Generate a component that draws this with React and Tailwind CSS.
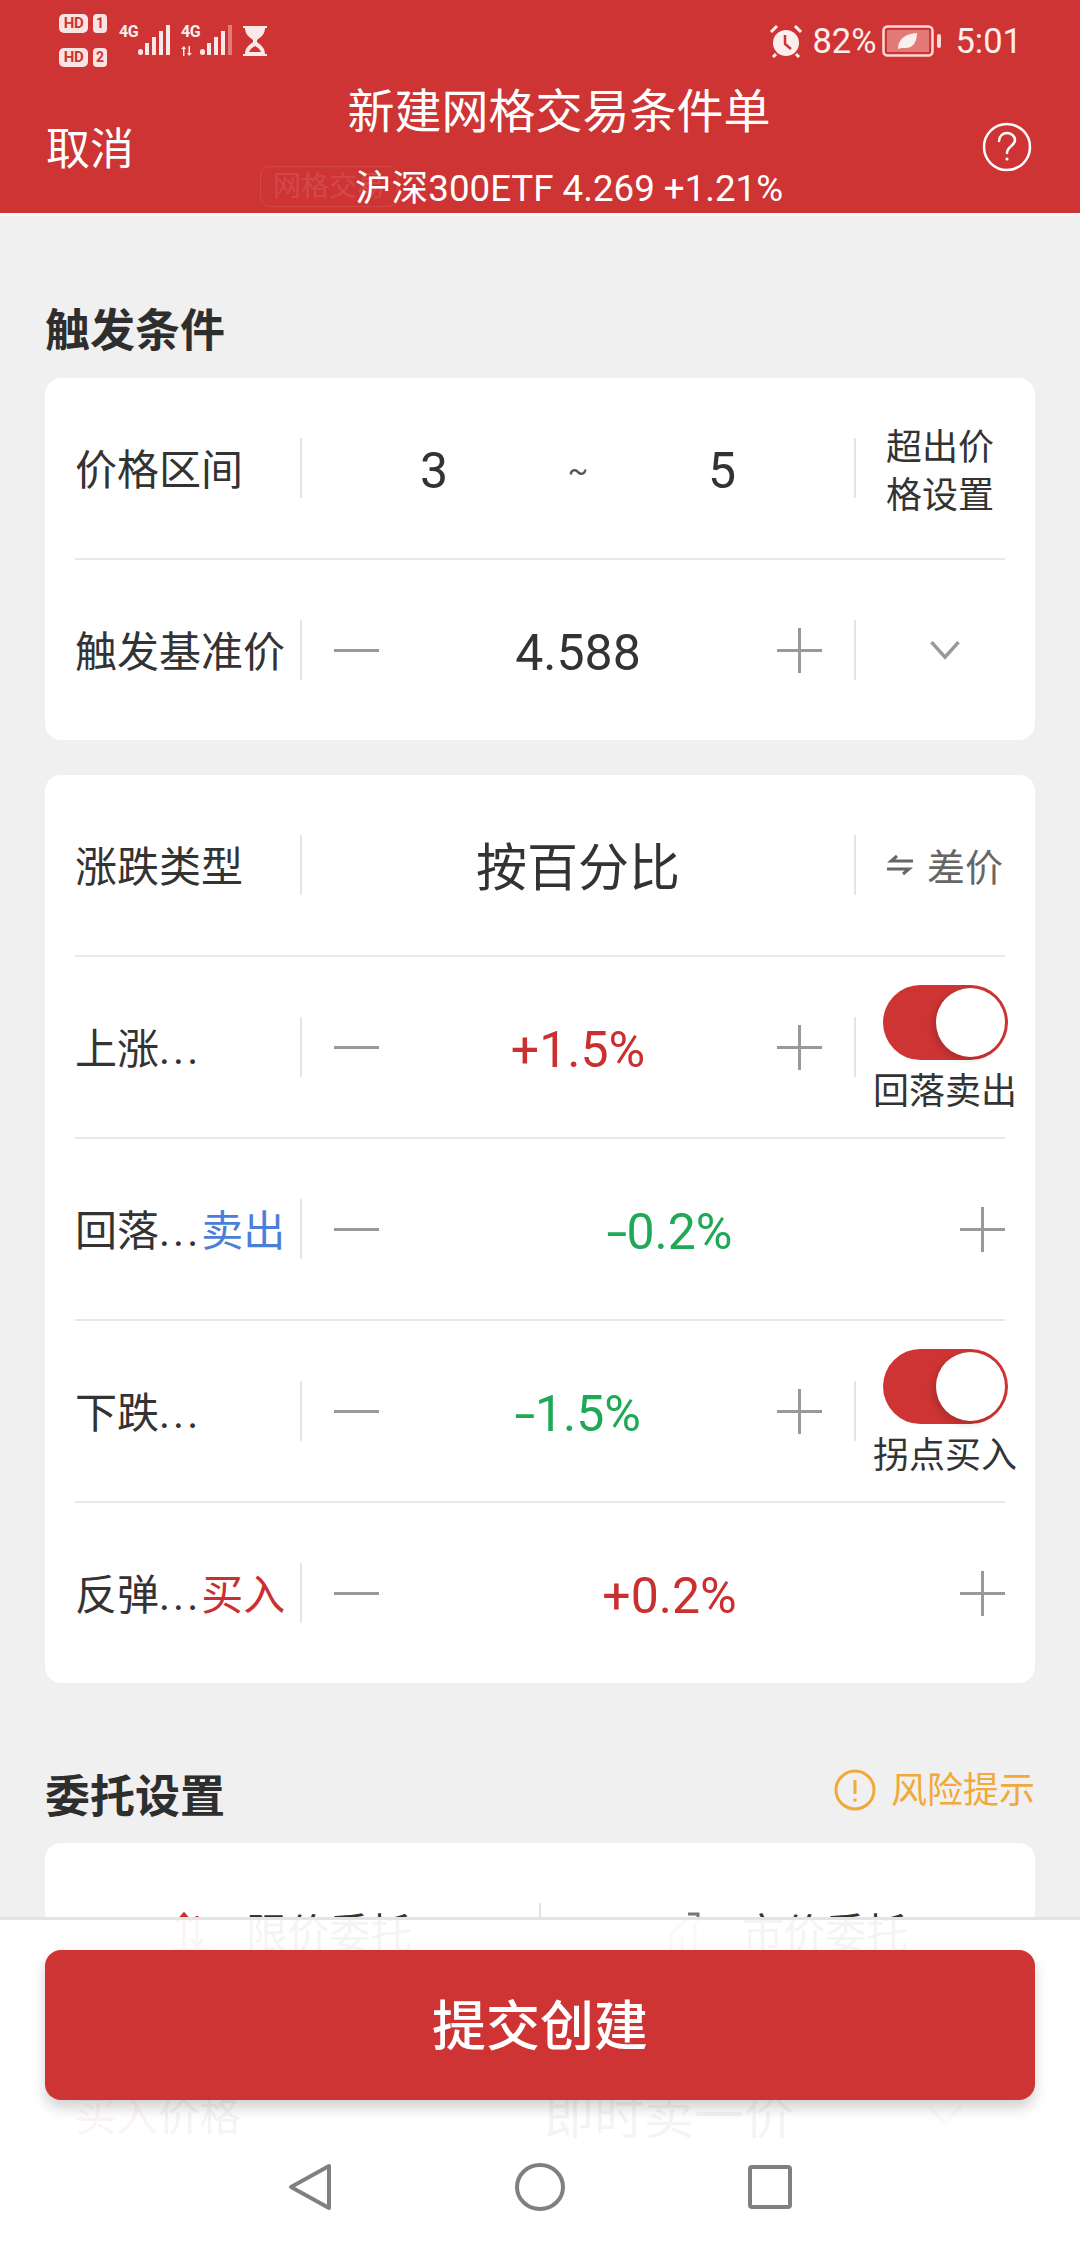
const RED = "bg-[#cd3433]";

function Signal({ last = "#fbe9e9" }) {
  return (
    <svg width="33" height="32" viewBox="0 0 33 32" fill="none">
      <rect x="0" y="25" width="5" height="6" rx="2.5" fill="#fbe9e9" />
      <rect x="7" y="19" width="4" height="12" fill="#fbe9e9" />
      <rect x="14" y="13" width="4" height="18" fill="#fbe9e9" />
      <rect x="21" y="7" width="4" height="24" fill="#fbe9e9" />
      <rect x="28" y="1" width="4" height="30" fill={last} />
    </svg>
  );
}

function SimBadge({ n }) {
  return (
    <div className="flex items-center gap-[5px]">
      <div className="w-[29px] h-[19px] rounded-[5px] bg-[#fbe3e3] text-[#cd3433] text-[15px] font-bold leading-[19px] text-center tracking-[-0.5px]">HD</div>
      <div className="w-[14px] h-[19px] rounded-[4px] bg-[#fbe3e3] text-[#cd3433] text-[14px] font-bold leading-[19px] text-center">{n}</div>
    </div>
  );
}

function StatusBar() {
  return (
    <div className="flex items-start justify-between h-[72px] pl-[59px] pr-[58px] text-[#fdeeee]">
      <div className="flex items-start">
        <div className="flex flex-col gap-[15px] pt-[14px]">
          <SimBadge n="1" />
          <SimBadge n="2" />
        </div>
        <div className="flex items-start ml-[12px] pt-[24px]">
          <span className="text-[16px] font-bold leading-[16px] tracking-[-0.5px]">4G</span>
          <Signal />
        </div>
        <div className="relative flex items-start ml-[10px] pt-[24px]">
          <span className="text-[16px] font-bold leading-[16px] tracking-[-0.5px]">4G</span>
          <svg className="absolute left-0 top-[46px]" width="18" height="10" viewBox="0 0 18 10" fill="#fbe9e9">
            <path d="M2 10V3H0l3-3 2 3H3.5v7zM9 0v7h2L8 10 6 7h1.5V0z" />
          </svg>
          <Signal last="#e27a78" />
        </div>
        <svg className="ml-[10px] mt-[26px]" width="24" height="30" viewBox="0 0 24 30" fill="#fbe9e9">
          <path d="M0 0h24v2h-2c0 6-4 9-8 12v2c4 3 8 6 8 12h2v2H0v-2h2c0-6 4-9 8-12v-2C6 11 2 8 2 2H0z" />
          <path d="M6 26c1-3 4-5 6-6 2 1 5 3 6 6z" fill="#cd3433" />
          <path d="M5 2h14c0 3-1 6-3 7H8C6 8 5 5 5 2z" fill="#fbe9e9" />
        </svg>
      </div>
      <div className="flex items-center mt-[22px] h-[38px]">
        <svg width="34" height="34" viewBox="0 0 34 34" fill="none">
          <circle cx="17" cy="19" r="13" fill="#fdeeee" />
          <path d="M16 11v9l6 5" stroke="#cd3433" strokeWidth="2.5" />
          <path d="M2 8l6-6M32 8l-6-6M7 30l-3 3M27 30l3 3" stroke="#fdeeee" strokeWidth="3" />
        </svg>
        <span className="ml-[9px] text-[34.5px] leading-none">82%</span>
        <svg className="ml-[6px]" width="60" height="32" viewBox="0 0 60 32" fill="none">
          <rect x="1.5" y="1.5" width="49" height="29" rx="4" stroke="#fbd9d9" strokeWidth="2.5" />
          <rect x="5" y="5" width="42" height="22" rx="1" fill="#e27a78" />
          <path d="M16 24c0-10 7-15 19-16 0 10-5 16-13 15-2 0-4 0-6 1z" fill="#fdeeee" />
          <rect x="55" y="9" width="4" height="14" rx="2" fill="#fbd9d9" />
        </svg>
        <span className="ml-[13px] text-[34.5px] leading-none">5:01</span>
      </div>
    </div>
  );
}

function Header() {
  return (
    <header className={`relative shrink-0 h-[216px] border-b-[3px] border-[#f9f6f6] ${RED} text-white`}>
      <StatusBar />
      <div className="absolute left-[260px] top-[166px] w-[138px] h-[41px] rounded-[10px] border border-white/10 text-white/10 text-[28px] leading-[39px] text-center">网格交易</div>
      <div className="relative flex items-center justify-between h-[130px] mt-[10px] pl-[46px] pr-[48px]">
        <span className="pt-[5px] text-[44px] leading-none">取消</span>
        <div className="flex flex-col items-center justify-between h-full pl-[2px]">
          <div className="pt-[4px] text-[47px] leading-[52px]">新建网格交易条件单</div>
          <div className="ml-[20px] pt-[4px] text-[36.7px] leading-[46px] whitespace-nowrap">沪深300ETF 4.269 +1.21%</div>
        </div>
        <svg width="50" height="50" viewBox="0 0 50 50" fill="none" stroke="white" strokeWidth="2.5">
          <circle cx="25" cy="25" r="23" />
          <path d="M17 19c0-5 4-8 8-8s8 3 8 7c0 6-8 6-8 13" strokeLinecap="round" />
          <circle cx="25" cy="37" r="1.6" fill="white" stroke="none" />
        </svg>
      </div>
    </header>
  );
}

function Row({ last, children }) {
  return (
    <div className={`flex items-center mx-[30px] ${last ? "h-[180px]" : "h-[182px] border-b-2 border-[#e8e8e8]"}`}>
      {children}
    </div>
  );
}

function Label({ children }) {
  return <div className="w-[225px] shrink-0 pt-[6px] text-[42px] leading-none text-[#333] whitespace-nowrap">{children}</div>;
}

function Dots() {
  return <span className="tracking-[3px]">...</span>;
}

// the app's minus sign is longer than the font's hyphen
function Neg() {
  return <span className="inline-block mx-[3px] scale-x-150">-</span>;
}

function Rule() {
  return <div className="w-[2px] h-[60px] shrink-0 bg-[#e4e4e4]" />;
}

function Minus() {
  return <div className="w-[45px] h-[3px] bg-[#999] shrink-0" />;
}

function Plus() {
  return (
    <svg className="shrink-0" width="45" height="45" viewBox="0 0 45 45" fill="#999">
      <rect y="21" width="45" height="3" />
      <rect x="21" width="3" height="45" />
    </svg>
  );
}

function Stepper({ value, color = "text-[#333]", wide }) {
  return (
    <div className={`flex-1 flex items-center justify-between pl-[32px] ${wide ? "" : "pr-[32px]"}`}>
      <Minus />
      <span className={`pt-[6px] text-[50px] leading-none ${color}`}>{value}</span>
      <Plus />
    </div>
  );
}

// right hand cell sits centred on x=945, past the row's own right edge
function Slot({ children }) {
  return <div className="w-[178px] -mr-[29px] shrink-0 flex flex-col items-center justify-center">{children}</div>;
}

function Chevron({ size = 30, color = "#999" }) {
  return (
    <svg width={size} height={size * 0.67} viewBox="0 0 30 20" fill="none" stroke={color} strokeWidth="3.5">
      <path d="M1.5 2L15 17 28.5 2" />
    </svg>
  );
}

function Toggle({ caption }) {
  return (
    <Slot>
      <div className={`flex justify-end w-[125px] h-[75px] p-[3px] rounded-full ${RED}`}>
        <div className="w-[69px] h-[69px] rounded-full bg-white shadow-[-3px_3px_6px_rgba(0,0,0,0.15)]" />
      </div>
      <div className="mt-[14px] text-[36px] leading-[36px] text-[#333] whitespace-nowrap">{caption}</div>
    </Slot>
  );
}

function SectionTitle({ children, right, className = "" }) {
  return (
    <div className={`flex items-center justify-between h-[60px] ${className}`}>
      <h2 className="pt-[4px] text-[45px] leading-none font-bold text-[#2e2e2e]">{children}</h2>
      {right}
    </div>
  );
}

function RiskTip() {
  return (
    <div className="flex items-center gap-[15px] -mt-[10px] text-[#f0a93a]">
      <svg width="42" height="42" viewBox="0 0 42 42" fill="none" stroke="currentColor" strokeWidth="3">
        <circle cx="21" cy="21" r="19" />
        <path d="M21 11v14" />
        <circle cx="21" cy="31" r="1.8" fill="currentColor" stroke="none" />
      </svg>
      <span className="pt-[2px] text-[36px] leading-none">风险提示</span>
    </div>
  );
}

function Triggers() {
  return (
    <>
      <SectionTitle className="mt-[83px] mb-[19px]">触发条件</SectionTitle>
      <div className="rounded-[16px] bg-white">
        <Row>
          <Label>价格区间</Label>
          <Rule />
          <div className="flex-1 flex items-center justify-center pt-[6px]">
            <span className="w-[144px] text-center text-[50px] leading-none text-[#333]">3</span>
            <span className="w-[144px] text-center text-[30px] leading-none text-[#555]">~</span>
            <span className="w-[144px] text-center text-[50px] leading-none text-[#333]">5</span>
          </div>
          <Rule />
          <div className="w-[149px] shrink-0 pt-[8px] pl-[30px] text-[36px] leading-[48px] text-[#333]">超出价<br />格设置</div>
        </Row>
        <Row last>
          <Label>触发基准价</Label>
          <Rule />
          <Stepper value="4.588" />
          <Rule />
          <Slot><Chevron /></Slot>
        </Row>
      </div>
    </>
  );
}

function GridSettings() {
  const red = "text-[#c9302f]";
  const green = "text-[#1fa855]";
  return (
    <div className="mt-[35px] rounded-[16px] bg-white">
      <Row>
        <Label>涨跌类型</Label>
        <Rule />
        <div className="flex-1 pt-[6px] text-center text-[51px] leading-none text-[#333]">按百分比</div>
        <Rule />
        <Slot>
          <div className="flex items-center gap-[14px] text-[#666]">
            <svg width="26" height="22" viewBox="0 0 26 22" fill="none" stroke="currentColor" strokeWidth="3">
              <path d="M26 7H4l6-5M0 15h22l-6 5" />
            </svg>
            <span className="pt-[6px] text-[38px] leading-none">差价</span>
          </div>
        </Slot>
      </Row>
      <Row>
        <Label>上涨<Dots /></Label>
        <Rule />
        <Stepper value="+1.5%" color={red} />
        <Rule />
        <Toggle caption="回落卖出" />
      </Row>
      <Row>
        <Label>回落<Dots /><span className="text-[#4a7fd8]">卖出</span></Label>
        <Rule />
        <Stepper value={<><Neg />0.2%</>} color={green} wide />
      </Row>
      <Row>
        <Label>下跌<Dots /></Label>
        <Rule />
        <Stepper value={<><Neg />1.5%</>} color={green} />
        <Rule />
        <Toggle caption="拐点买入" />
      </Row>
      <Row last>
        <Label>反弹<Dots /><span className={red}>买入</span></Label>
        <Rule />
        <Stepper value="+0.2%" color={red} wide />
      </Row>
    </div>
  );
}

function OrderSettings() {
  return (
    <>
      <SectionTitle className="mt-[82px] mb-[18px]" right={<RiskTip />}>委托设置</SectionTitle>
      <div className="rounded-[16px] bg-white">
        <Row>
          <div className="flex-1 -ml-[30px] flex items-center justify-center gap-[36px]">
            <svg width="38" height="42" viewBox="0 0 38 42" fill="none" stroke="#c9302f" strokeWidth="3">
              <path d="M12 40V4M5 10l7-8 7 8" />
              <path d="M25 4v30M19 27l6 7 6-7M1 38h36" />
            </svg>
            <span className="pt-[4px] text-[41.5px] leading-none text-[#333]">限价委托</span>
          </div>
          <Rule />
          <div className="flex-1 -mr-[30px] flex items-center justify-center gap-[36px]">
            <svg width="38" height="42" viewBox="0 0 38 42" fill="none" stroke="#777" strokeWidth="3">
              <path d="M3 40V22L20 6M27 40V12M14 40V24M20 2h10v8" />
            </svg>
            <span className="pt-[4px] text-[41.5px] leading-none text-[#333]">市价委托</span>
          </div>
        </Row>
        <Row last>
          <div className="w-[225px] pt-[4px] text-[41.5px] leading-none text-[#333] whitespace-nowrap"><span className="text-[#c9302f]">买入</span>价格</div>
          <div className="flex-1 pl-[244px] pt-[4px] text-[50px] leading-none text-[#333]">即时卖一价</div>
          <div className="w-[124px] flex justify-center -mr-[2px]"><Chevron size={36} /></div>
        </Row>
      </div>
    </>
  );
}

function BottomBar() {
  return (
    <div className="absolute inset-x-0 bottom-0 h-[327px] flex flex-col border-t-[3px] border-[#e4e4e4] bg-white/95">
      <div className="mt-[30px] mx-[45px] h-[150px] shrink-0 flex items-center justify-center pt-[6px] rounded-[16px] bg-[#cd3433] text-white text-[54px] leading-none font-medium shadow-[0_8px_14px_rgba(0,0,0,0.18)]">
        提交创建
      </div>
      <div className="flex-1 flex items-start justify-center gap-[183px] pt-[63px]">
        <svg width="44" height="48" viewBox="0 0 44 48" fill="none" stroke="#808080" strokeWidth="4" strokeLinejoin="round">
          <path d="M41 3v42L3 24z" />
        </svg>
        <svg width="50" height="48" viewBox="0 0 50 48" fill="none" stroke="#808080" strokeWidth="4">
          <ellipse cx="25" cy="24" rx="23" ry="22" />
        </svg>
        <svg className="mt-[2px]" width="44" height="44" viewBox="0 0 44 44" fill="none" stroke="#808080" strokeWidth="4" strokeLinejoin="round">
          <rect x="2" y="2" width="40" height="40" rx="2" />
        </svg>
      </div>
    </div>
  );
}

export default function App() {
  return (
    <div className="relative flex flex-col w-[1080px] h-[2244px] overflow-hidden bg-[#f0f0f0] font-[Roboto,'Noto_Sans_CJK_SC',sans-serif]">
      <Header />
      <main className="px-[45px]">
        <Triggers />
        <GridSettings />
        <OrderSettings />
      </main>
      <BottomBar />
    </div>
  );
}
